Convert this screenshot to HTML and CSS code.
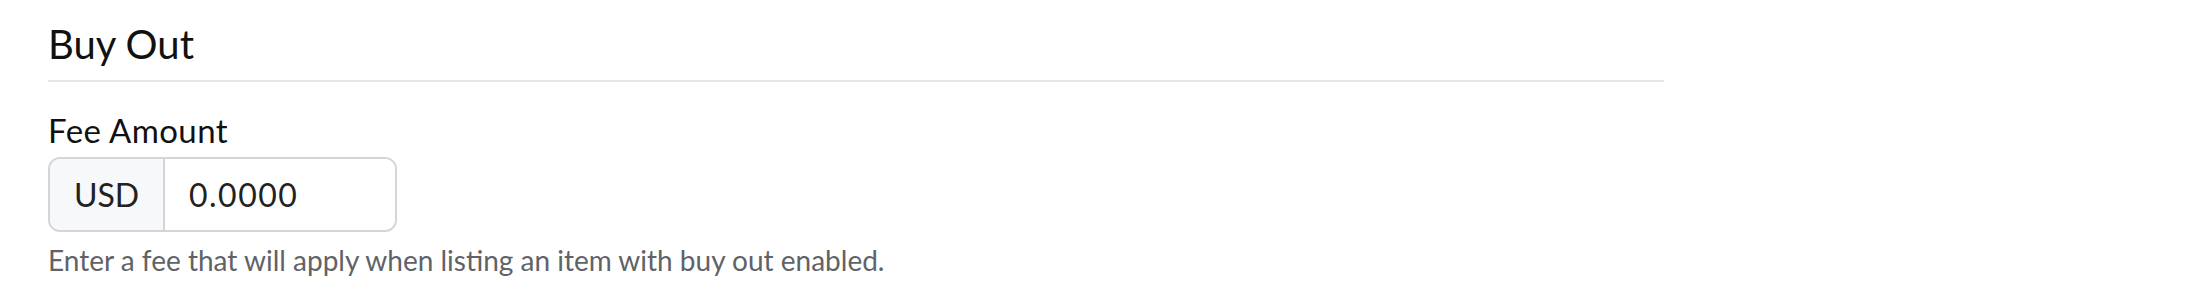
FILE: index.html
```html
<html>

<head>
    <title>Buy Out</title>
    <link rel="stylesheet" href="styles.css">
</head>

<body>
    <div class="section">
        <h2 class="section-title">Buy Out</h2>

        <div class="field">
            <label class="field-label" for="fee">Fee Amount</label>
            <div class="input-group">
                <span class="addon">USD</span>
                <input id="fee" class="amount" type="text" value="0.0000">
            </div>
            <p class="help">Enter a fee that will apply when listing an item with buy out enabled.</p>
        </div>
    </div>
</body>

</html>
```

FILE: styles.css
```css
body {
    margin: 0;
    background: #ffffff;
    font-family: Lato, "Noto Sans", sans-serif;
    color: #111111;
}

.section {
    width: 1616px;
    padding: 0 48px;
}

.section-title {
    font-size: 40px;
    font-weight: 400;
    line-height: 48px;
    margin: 0;
    padding: 20px 0 12px 0;
    border-bottom: 2px solid #e5e6eb;
}

.field {
    padding-top: 28px;
}

.field-label {
    display: block;
    font-size: 33px;
    letter-spacing: 0.4px;
    line-height: 40px;
    margin-bottom: 7px;
}

.input-group {
    display: flex;
    width: 349px;
    height: 75px;
    box-sizing: border-box;
    border: 2px solid #d3d5db;
    border-radius: 12px;
    overflow: hidden;
}

.addon {
    display: flex;
    align-items: center;
    justify-content: center;
    width: 113px;
    background: #f7f8fa;
    border-right: 2px solid #d3d5db;
    font-size: 32px;
    color: #222222;
}

.amount {
    flex: 1;
    min-width: 0;
    border: 0;
    outline: none;
    padding: 0 24px;
    font-family: inherit;
    font-size: 32px;
    letter-spacing: 1.5px;
    color: #222222;
    background: #ffffff;
}

.help {
    margin: 10px 0 0 0;
    font-size: 28px;
    line-height: 36px;
    color: #5f6368;
}
```
